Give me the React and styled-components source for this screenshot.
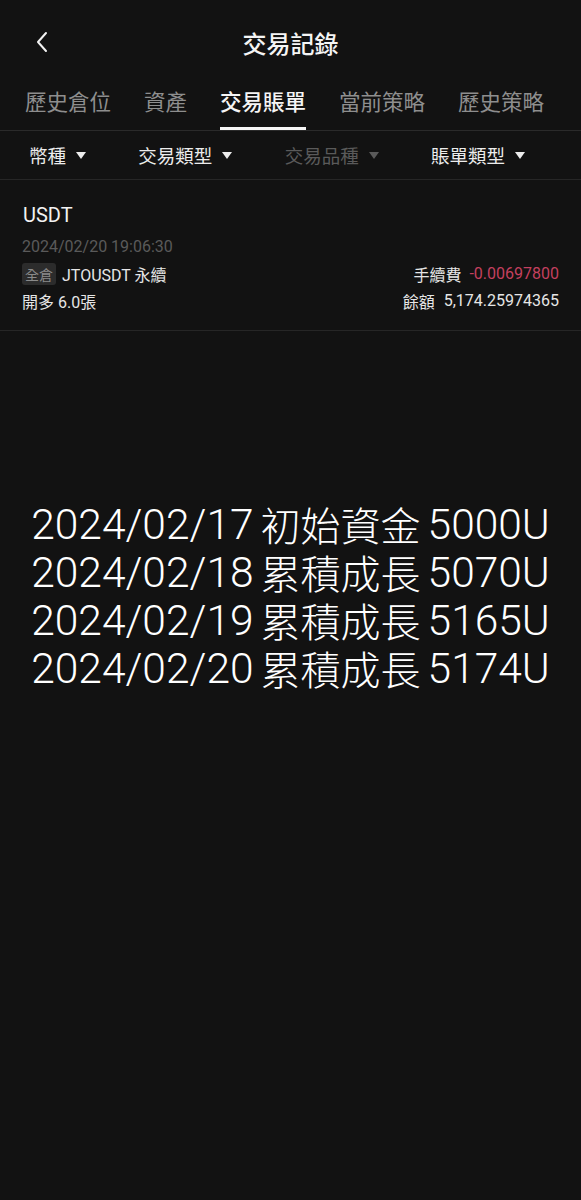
import React from "react";
import styled, { createGlobalStyle } from "styled-components";

const GlobalStyle = createGlobalStyle`
  html, body {
    margin: 0;
    padding: 0;
    background: #121212;
  }
  * {
    box-sizing: border-box;
  }
`;

const tabs = ["歷史倉位", "資產", "交易賬單", "當前策略", "歷史策略"];

const filters = [
  { label: "幣種" },
  { label: "交易類型" },
  { label: "交易品種", disabled: true },
  { label: "賬單類型" },
];

const notes = [
  ["2024/02/17", "初始資金", "5000U"],
  ["2024/02/18", "累積成長", "5070U"],
  ["2024/02/19", "累積成長", "5165U"],
  ["2024/02/20", "累積成長", "5174U"],
];

export default function App() {
  return (
    <Page>
      <GlobalStyle />
      <Header>
        <BackButton>
          <svg width="14" height="22" viewBox="0 0 14 22">
            <path
              d="M11 2 L3 11 L11 20"
              fill="none"
              stroke="#f2f2f2"
              strokeWidth="2"
              strokeLinecap="round"
              strokeLinejoin="round"
            />
          </svg>
        </BackButton>
        <Title>交易記錄</Title>
      </Header>

      <TabBar>
        {tabs.map((t, i) => (
          <Tab key={t} active={i === 2}>
            {t}
          </Tab>
        ))}
      </TabBar>

      <FilterBar>
        {filters.map((f) => (
          <Filter key={f.label} disabled={f.disabled}>
            {f.label}
            <Caret />
          </Filter>
        ))}
      </FilterBar>

      <Card>
        <Coin>USDT</Coin>
        <Time>2024/02/20 19:06:30</Time>
        <Row>
          <Left>
            <Tag>全倉</Tag>
            JTOUSDT 永續
          </Left>
          <Right>
            手續費<Fee>-0.00697800</Fee>
          </Right>
        </Row>
        <Row>
          <Left>開多 6.0張</Left>
          <Right>
            餘額<Amount>5,174.25974365</Amount>
          </Right>
        </Row>
      </Card>

      <Notes>
        {notes.map(([d, k, v]) => (
          <NoteLine key={d}>
            <span>{d}</span>
            <Cjk>{k}</Cjk>
            <span>{v}</span>
          </NoteLine>
        ))}
      </Notes>
    </Page>
  );
}

const Page = styled.div`
  width: 581px;
  height: 1200px;
  background: #121212;
  color: #f2f2f2;
  font-family: Roboto, "Noto Sans CJK TC", sans-serif;
  overflow: hidden;
`;

const Header = styled.div`
  position: relative;
  height: 84px;
  display: flex;
  align-items: center;
  justify-content: center;
`;

const BackButton = styled.div`
  position: absolute;
  left: 35px;
  top: 31px;
  display: flex;
`;

const Title = styled.div`
  font-family: "Noto Sans CJK TC", sans-serif;
  font-size: 24px;
  font-weight: 500;
  color: #f5f5f5;
`;

const TabBar = styled.div`
  display: flex;
  gap: 33px;
  padding: 0 25px;
  border-bottom: 1px solid #2a2a2a;
`;

const Tab = styled.div`
  font-family: "Noto Sans CJK TC", sans-serif;
  font-size: 21.5px;
  line-height: 30px;
  padding: 2px 0 11px;
  font-weight: ${(p) => (p.active ? 500 : 400)};
  color: ${(p) => (p.active ? "#f5f5f5" : "#8e8e8e")};
  border-bottom: 3px solid ${(p) => (p.active ? "#f5f5f5" : "transparent")};
  white-space: nowrap;
`;

const FilterBar = styled.div`
  height: 49px;
  display: flex;
  align-items: center;
  justify-content: space-between;
  padding: 0 56px 0 29px;
  border-bottom: 1px solid #262626;
`;

const Filter = styled.div`
  display: flex;
  align-items: center;
  gap: 10px;
  font-family: "Noto Sans CJK TC", sans-serif;
  font-size: 18.5px;
  color: ${(p) => (p.disabled ? "#5a5a5a" : "#ececec")};
`;

const Caret = styled.span`
  width: 0;
  height: 0;
  border-left: 5px solid transparent;
  border-right: 5px solid transparent;
  border-top: 7px solid currentColor;
`;

const Card = styled.div`
  padding: 22px 22px 16px;
  border-bottom: 1px solid #262626;
  display: flex;
  flex-direction: column;
`;

const Coin = styled.div`
  font-size: 20px;
  line-height: 26px;
  color: #f2f2f2;
  padding-left: 1px;
`;

const Time = styled.div`
  font-size: 16px;
  line-height: 20px;
  margin-top: 9px;
  margin-bottom: 3px;
  color: #5a5a5a;
`;

const Row = styled.div`
  display: flex;
  justify-content: space-between;
  align-items: center;
  height: 27px;
  font-size: 16px;
  color: #e6e6e6;
`;

const Left = styled.div`
  display: flex;
  align-items: center;
  gap: 6px;
`;

const Right = styled.div`
  display: flex;
  align-items: center;
  white-space: pre;
`;

const Tag = styled.span`
  display: inline-flex;
  align-items: center;
  justify-content: center;
  height: 22px;
  padding: 0 3px;
  border-radius: 3px;
  background: #2c2c2c;
  color: #8a8a8a;
  font-size: 14px;
  font-family: "Noto Sans CJK TC", sans-serif;
`;

const Fee = styled.span`
  margin-left: 8px;
  color: #c4405f;
`;

const Amount = styled.span`
  margin-left: 9px;
`;

const Notes = styled.div`
  margin-top: 169px;
  display: flex;
  flex-direction: column;
  align-items: center;
`;

const NoteLine = styled.div`
  display: flex;
  align-items: center;
  gap: 7px;
  height: 48px;
  font-family: Roboto, sans-serif;
  font-weight: 300;
  font-size: 42.5px;
  color: #ffffff;
  white-space: pre;
`;

const Cjk = styled.span`
  font-family: "Noto Sans CJK TC", sans-serif;
  font-weight: 300;
  font-size: 40px;
  line-height: 48px;
`;
